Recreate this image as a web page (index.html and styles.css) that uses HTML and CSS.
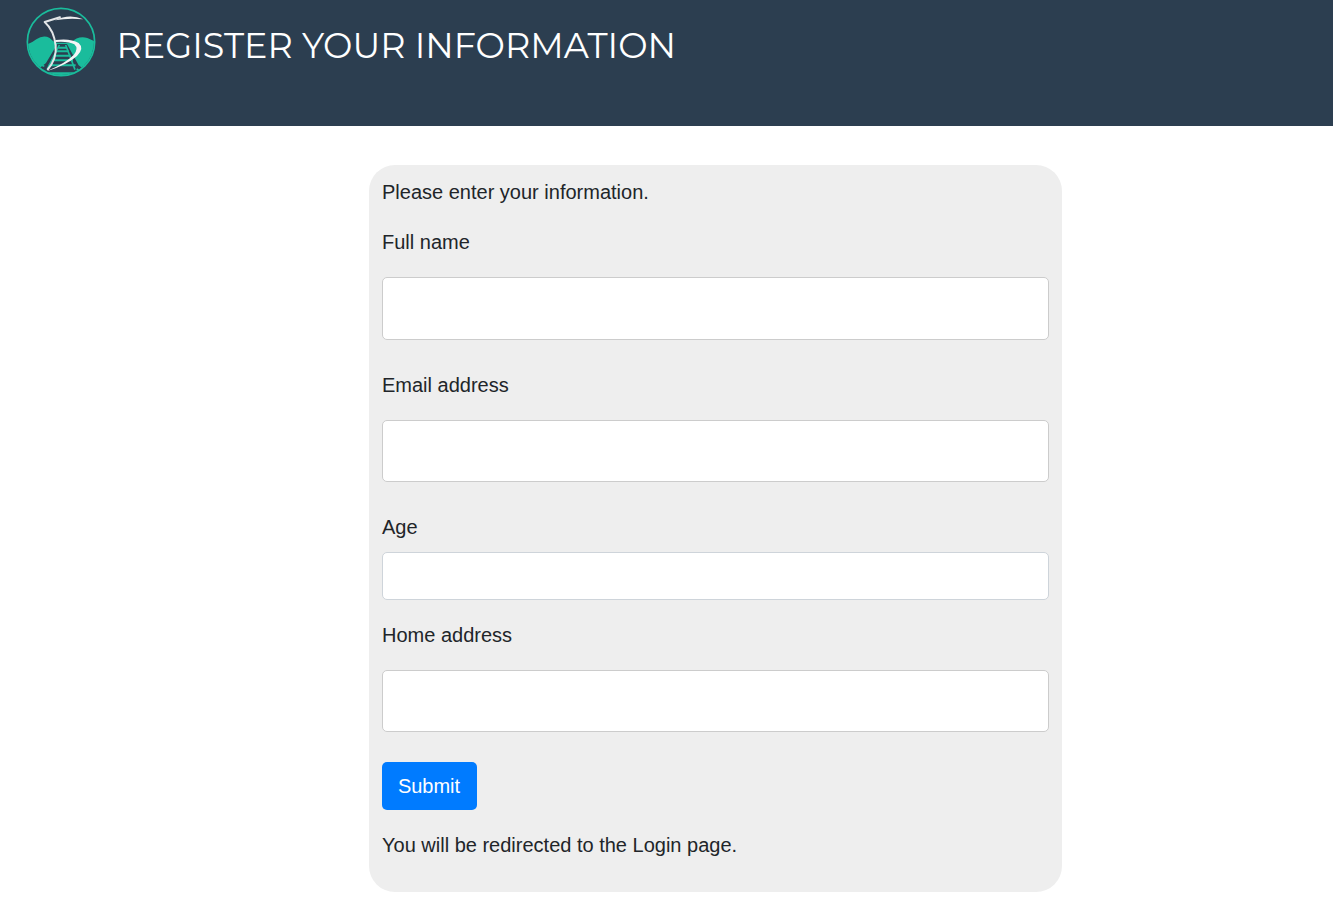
FILE: index.html
```html
<!DOCTYPE html>
<html lang="en">
<head>
<meta charset="utf-8">
<title>Register your information</title>
<link rel="stylesheet" href="styles.css">
</head>
<body>
<header class="header">
  <svg class="logo" viewBox="0 0 270 252" aria-hidden="true">
    <defs><clipPath id="disc"><circle cx="135" cy="126" r="99"/></clipPath></defs>
    <g clip-path="url(#disc)">
      <path fill="#1abc9c" d="M30 134Q46 130 61 118Q82 104 101 114Q110 125 122 128L165 128Q187 106 214 114L240 126V240H30Z"/>
      <path fill="#2c3e50" d="M124 132H153L188 196L202 206L183 217H93L70 205L90 189Z"/>
      <g fill="none" stroke="#1abc9c">
        <path stroke-width="5" d="M130 135L94 207M149 135L177 209"/>
        <path stroke-width="6" d="M127 143H153M122 154H158M115 167H164M107 181H171M98 196H179"/>
        <path stroke-width="5" d="M67 192L85 199M188 190L207 199M182 207L193 213"/>
      </g>
    </g>
    <circle cx="135" cy="126" r="101" fill="none" stroke="#1abc9c" stroke-width="5"/>
    <g fill="none" stroke="#e3e6e8" stroke-linejoin="round">
      <path stroke-width="6" d="M134 51L86 66Q114 91 119 137Q123 177 94 210"/>
      <path fill="#eef0f1" stroke="none" d="M117 61Q160 40 202 58Q158 53 117 61Z"/>
      <path fill="#f4f5f6" stroke="none" d="M118 120Q164 114 188 129Q206 145 183 168Q153 195 92 214Q149 189 173 165Q189 146 175 133Q157 123 118 126Z"/>
    </g>
  </svg>
  <h1 class="title">REGISTER YOUR INFORMATION</h1>
</header>
<main class="card">
  <form>
    <p class="intro">Please enter your information.</p>
    <label class="label" for="name">Full name</label>
    <input class="input first" id="name" type="text">
    <label class="label" for="email">Email address</label>
    <input class="input" id="email" type="email">
    <label class="label compact" for="age">Age</label>
    <input class="input short" id="age" type="text">
    <label class="label" for="home">Home address</label>
    <input class="input" id="home" type="text">
    <button class="submit" type="button">Submit</button>
    <p class="note">You will be redirected to the Login page.</p>
  </form>
</main>
</body>
</html>
```
FILE: styles.css
```css
* { box-sizing: border-box; }
body {
  margin: 0;
  background: #fff;
  color: #212529;
  font: 20px/30px "Liberation Sans", Arial, sans-serif;
}
.header {
  display: flex;
  height: 126px;
  padding-left: 16px;
  background: #2c3e50;
}
.logo { width: 90px; height: 84px; flex: none; }
.title {
  margin: 24px 0 0 10.5px;
  color: #fff;
  font: 400 35px/43px Montserrat, Inter, sans-serif;
  white-space: nowrap;
}
.card {
  width: 693px;
  height: 727px;
  margin: 39px 0 0 369px;
  padding: 12px 13px;
  border-radius: 26px;
  background: #eee;
}
.intro { margin: 0 0 20px; }
.label { display: block; margin-bottom: 20px; }
.compact { margin-bottom: 10px; }
.input {
  display: block;
  width: 100%;
  height: 62px;
  margin: 0 0 30px;
  padding: 6px 12px;
  border: 1px solid #ccc;
  border-radius: 5px;
  background: #fff;
  font: inherit;
}
.first { height: 63px; }
.short { height: 48px; margin-bottom: 20px; border-color: #ced4da; }
.submit {
  display: block;
  width: 95px;
  height: 48px;
  padding: 0 1px 0 0;
  border: 0;
  border-radius: 5px;
  background: #007bff;
  color: #fff;
  font: inherit;
}
.note { margin: 20px 0 0; }
```
